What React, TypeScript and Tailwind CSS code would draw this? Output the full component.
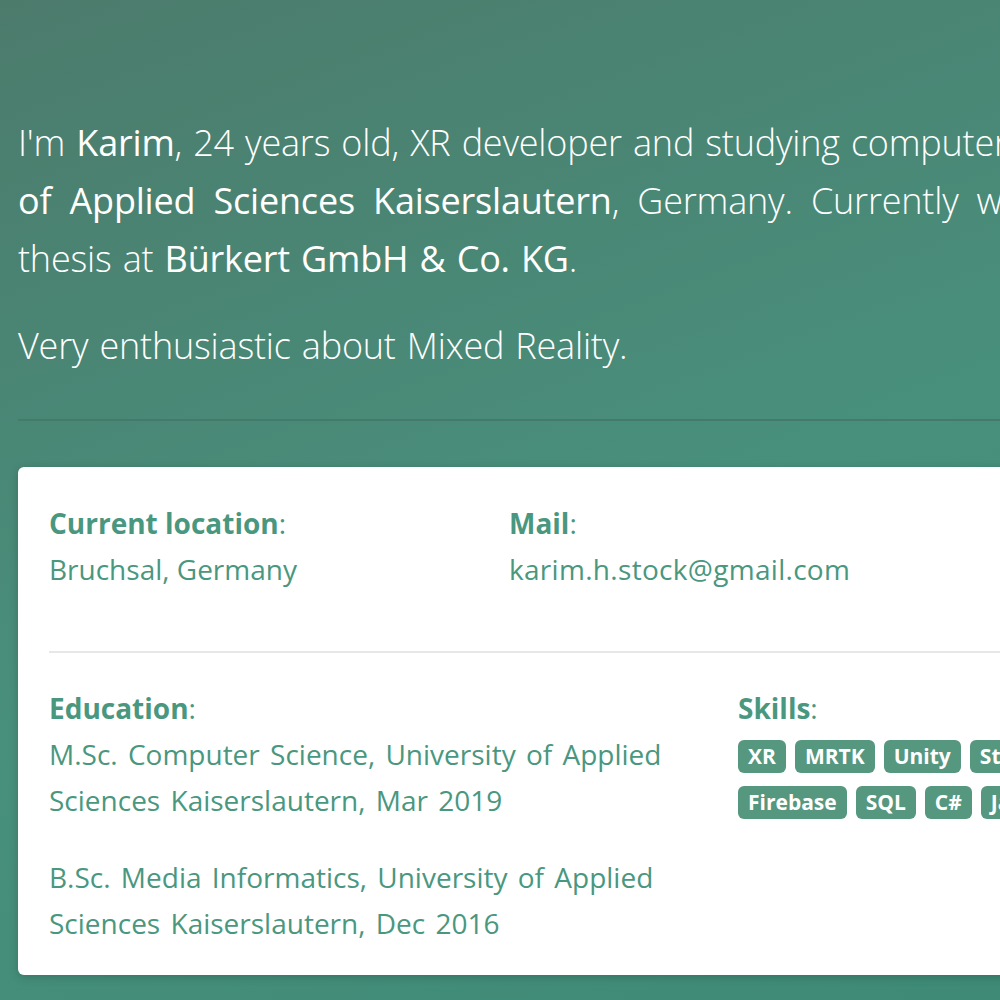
import React from "react";

const badgesRow1 = ["XR", "MRTK", "Unity", "Steam VR", "ARCore", "Vuforia"];
const badgesRow2 = ["Firebase", "SQL", "C#", "Java", "Python", "Git"];

function Badge({ label }: { label: string }) {
  return (
    <span className="inline-flex h-[33px] shrink-0 items-center rounded-[6px] bg-[#55977f] px-[10px] text-[21px] font-bold leading-none text-white whitespace-nowrap">
      {label}
    </span>
  );
}

export default function App() {
  return (
    <div
      className="relative h-[1000px] w-[1000px] overflow-hidden bg-[linear-gradient(160deg,#4c7b6c_0%,#48907c_55%,#3e8a76_100%)]"
      style={{ fontFamily: '"Open Sans", "Noto Sans", sans-serif' }}
    >
      <div className="w-[1500px] pl-[18px] pt-[114px]">
        <div className="text-[36px] font-light leading-[58px] text-white tracking-[-0.2px] [word-spacing:2px]">
          <div className="whitespace-nowrap">
            I'm <span className="font-normal">Karim</span>, 24 years old, XR developer and studying computer science at the
          </div>
          <div className="whitespace-nowrap [word-spacing:9px]">
            <span className="font-normal">of Applied Sciences Kaiserslautern</span>, Germany. Currently working on my
          </div>
          <div className="whitespace-nowrap">
            thesis at <span className="font-normal">Bürkert GmbH &amp; Co. KG</span>.
          </div>
        </div>
        <p className="mt-[29px] text-[36px] font-light leading-[58px] text-white tracking-[-0.2px] [word-spacing:2px]">
          Very enthusiastic about Mixed Reality.
        </p>
        <div className="mt-[44px] h-[2px] w-full bg-[#437a69]" />
        <div className="mt-[46px] w-[1300px] rounded-[6px] bg-white pb-[29px] pl-[31px] pr-[31px] pt-[33px] text-[28px] leading-[46px] text-[#4a9780] shadow-[0_2px_10px_rgba(0,0,0,0.18)]">
          <div className="flex">
            <div className="w-[460px] shrink-0">
              <div>
                <span className="font-bold">Current location</span>:
              </div>
              <div>Bruchsal, Germany</div>
            </div>
            <div className="w-[460px] shrink-0">
              <div>
                <span className="font-bold">Mail</span>:
              </div>
              <div className="[word-spacing:0px] tracking-[0.3px]">karim.h.stock@gmail.com</div>
            </div>
          </div>
          <div className="mt-[59px] h-[2px] w-full bg-[#e6e8e7]" />
          <div className="mt-[32px] flex">
            <div className="w-[689px] shrink-0">
              <div>
                <span className="font-bold">Education</span>:
              </div>
              <div className="w-[660px] [word-spacing:3px]">
                M.Sc. Computer Science, University of Applied Sciences Kaiserslautern, Mar 2019
              </div>
              <div className="mt-[31px] w-[660px] [word-spacing:3px]">
                B.Sc. Media Informatics, University of Applied Sciences Kaiserslautern, Dec 2016
              </div>
            </div>
            <div className="min-w-0 flex-1">
              <div>
                <span className="font-bold">Skills</span>:
              </div>
              <div className="mt-[9px] flex flex-col gap-[13px]">
                <div className="flex gap-[9px]">
                  {badgesRow1.map((b) => (
                    <Badge key={b} label={b} />
                  ))}
                </div>
                <div className="flex gap-[9px]">
                  {badgesRow2.map((b) => (
                    <Badge key={b} label={b} />
                  ))}
                </div>
              </div>
            </div>
          </div>
        </div>
      </div>
    </div>
  );
}
